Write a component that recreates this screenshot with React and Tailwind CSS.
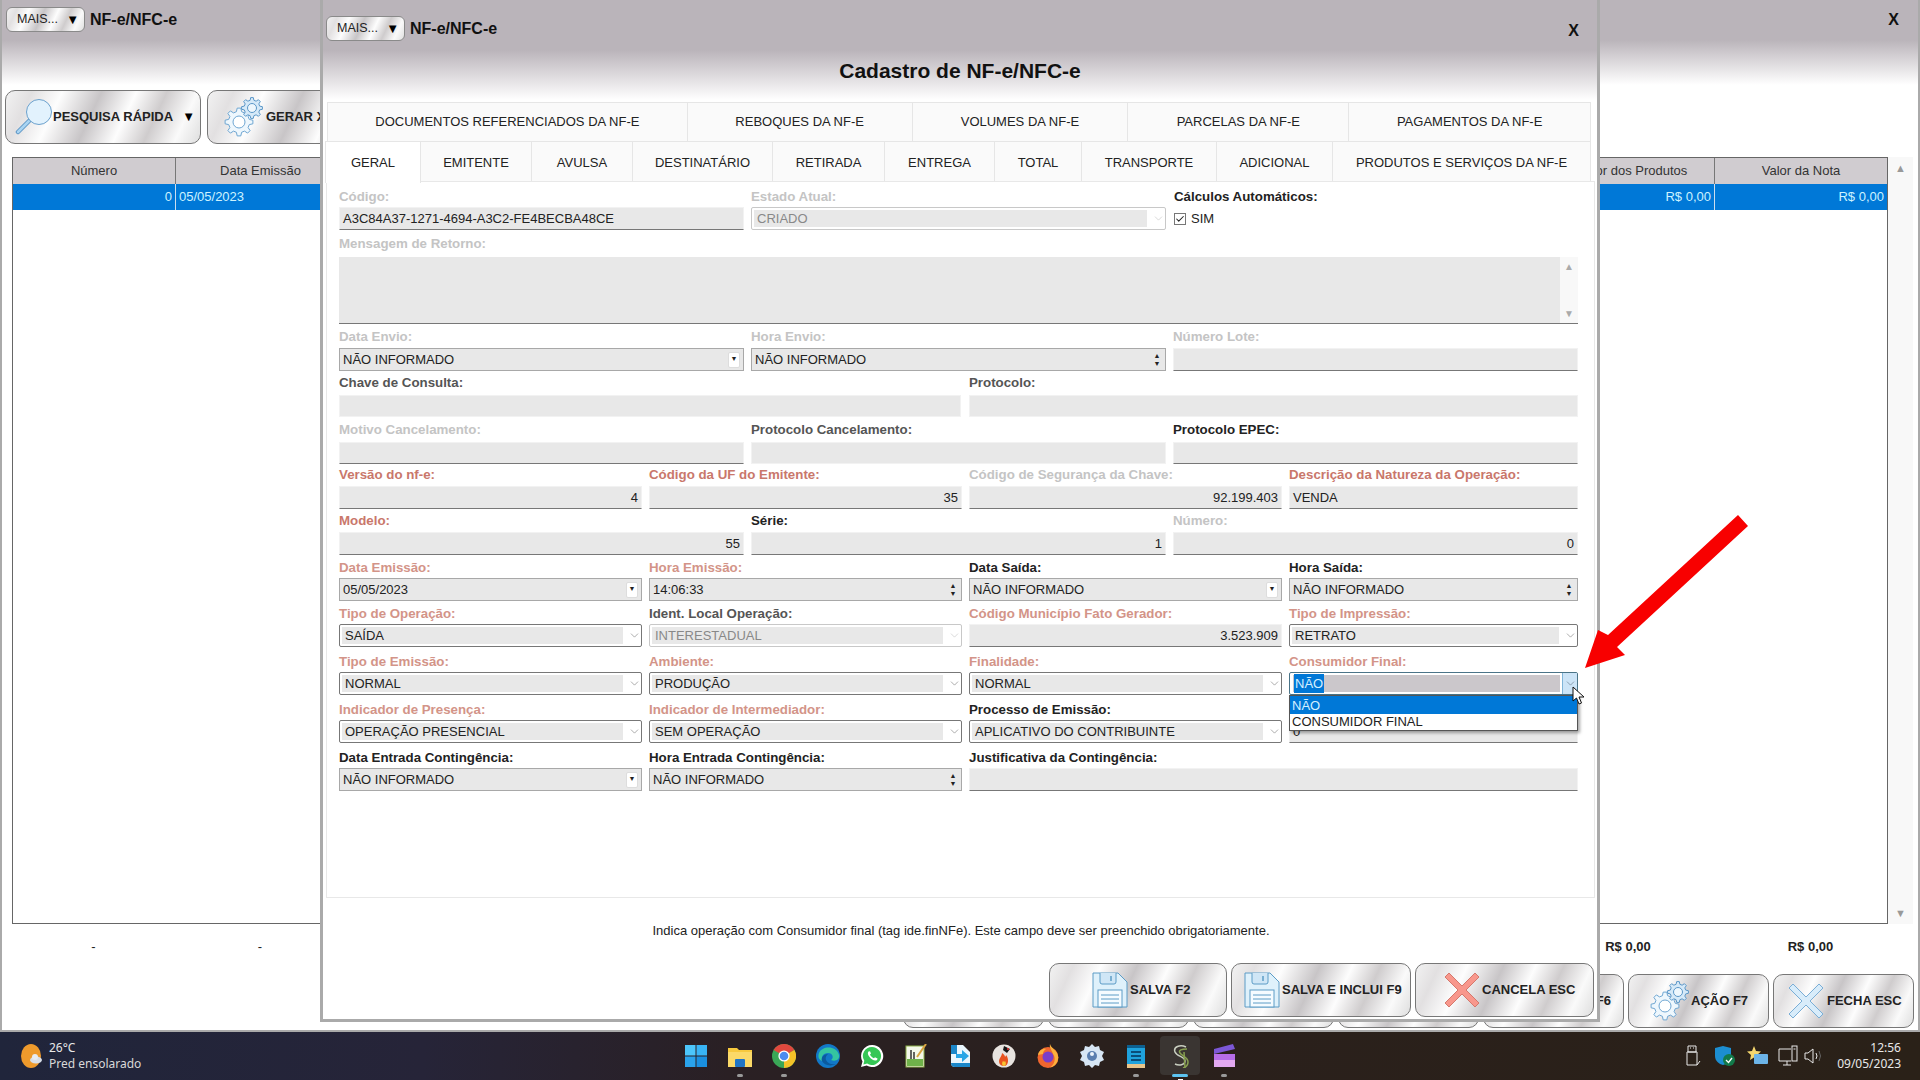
import { Check, ChevronDown } from "lucide-react";

const METAL =
  "bg-[linear-gradient(115deg,#f2f2f2_0%,#e2e0e1_12%,#fdfdfd_26%,#c8c5c7_44%,#fdfdfd_60%,#cfcccd_74%,#fafafa_88%,#dedede_100%)]";

function gearPath(cx, cy, r) {
  const teeth = 8;
  const pts = [];
  for (let i = 0; i < teeth; i++) {
    const a = (i / teeth) * Math.PI * 2;
    const s = Math.PI / teeth;
    const at = (rad, ang) => `${(cx + rad * Math.cos(ang)).toFixed(1)},${(cy + rad * Math.sin(ang)).toFixed(1)}`;
    pts.push(at(r * 0.76, a - s * 0.62), at(r, a - s * 0.32), at(r, a + s * 0.32), at(r * 0.76, a + s * 0.62));
  }
  return "M" + pts.join("L") + "Z";
}

function Gears() {
  return (
    <svg width="40" height="40" viewBox="0 0 40 40" className="shrink-0">
      <path d={gearPath(15, 25, 14)} fill="#eef7fd" stroke="#6ea6d2" />
      <circle cx="15" cy="25" r="6" fill="#fff" stroke="#6ea6d2" />
      <path d={gearPath(28, 11, 10.5)} fill="#d5e9f8" stroke="#5b97c8" />
      <circle cx="28" cy="11" r="4.5" fill="#eef7fd" stroke="#5b97c8" />
    </svg>
  );
}

function Floppy() {
  return (
    <svg width="36" height="36" viewBox="0 0 36 36" className="shrink-0">
      <path d="M1 1H26L35 10V35H1Z" fill="#dff1fb" stroke="#5c9cc6" />
      <path d="M8 1V10Q8 12 10 12H22Q24 12 24 10V1" fill="#cfe6f6" stroke="#5c9cc6" />
      <path d="M19 4V9" stroke="#5c9cc6" strokeWidth="1.5" />
      <rect x="6" y="18" width="24" height="17" fill="#f5fbff" stroke="#5c9cc6" />
      <path d="M9 23H27M9 27H27M9 31H27" stroke="#5c9cc6" />
    </svg>
  );
}

function CrossIcon({ fill, stroke }) {
  return (
    <svg width="36" height="36" viewBox="0 0 36 36" className="shrink-0">
      <path
        d="M5 1L18 14L31 1L35 5L22 18L35 31L31 35L18 22L5 35L1 31L14 18L1 5Z"
        fill={fill}
        stroke={stroke}
        strokeLinejoin="round"
      />
    </svg>
  );
}

function Magnifier() {
  return (
    <svg width="38" height="38" viewBox="0 0 38 38" className="shrink-0">
      <path d="M14 23L3 34" stroke="#5f97c6" strokeWidth="4.5" strokeLinecap="round" />
      <path d="M14 23L3 34" stroke="#a9d4f2" strokeWidth="2.5" strokeLinecap="round" />
      <circle cx="24" cy="14" r="12.5" fill="#e2f2fd" stroke="#6ba1cd" />
    </svg>
  );
}

function MaisButton() {
  return (
    <div className={`flex items-center justify-between w-[79px] h-[25px] pl-[10px] pr-[5px] rounded-[6px] border border-[#8a8a8a] ${METAL} text-[12.5px] text-[#222]`}>
      <span>MAIS...</span>
      <span className="text-[13px] text-black">▼</span>
    </div>
  );
}

function BigButton({ width = "w-[141px]", height = "h-[54px]", children, className = "" }) {
  return (
    <div className={`flex items-center shrink-0 ${width} ${height} rounded-[10px] border border-[#777] ${METAL} text-[13px] font-bold text-[#222] ${className}`}>
      {children}
    </div>
  );
}

function Label({ children, tone = "muted" }) {
  const tones = {
    muted: "text-[#c4c4c4]",
    dark: "text-[#555]",
    black: "text-[#222]",
    red: "text-[#c9776b]",
    rose: "text-[#d39488]",
  };
  return <div className={`h-4 leading-4 text-[13.3px] font-bold whitespace-nowrap ${tones[tone]}`}>{children}</div>;
}

function TextBox({ value, right, flat }) {
  return (
    <div
      className={`flex items-center h-full bg-[#e8e8e8] border border-[#f2f2f2] px-[3px] text-[13px] text-[#222] ${
        right ? "justify-end" : ""
      } ${flat ? "" : "border-b-[#777]"}`}
    >
      {value}
    </div>
  );
}

function DateBox({ value, spin }) {
  return (
    <div className="flex items-center justify-between h-full bg-[#e8e8e8] border border-[#a8a8a8] pl-[3px] pr-[3px] text-[13px] text-[#222]">
      <span>{value}</span>
      {spin ? (
        <span className="flex flex-col items-center w-[10px] text-[7px] leading-[8px] text-[#222]">
          <span>▲</span>
          <span>▼</span>
        </span>
      ) : (
        <span className="flex items-center justify-center w-[12px] h-[16px] rounded-[2px] bg-white border border-[#ddd] text-[7px] text-[#222]">▼</span>
      )}
    </div>
  );
}

function ComboBox({ value, disabled }) {
  return (
    <div className={`flex items-stretch h-full bg-white rounded-[2px] border p-[2px] text-[13px] ${disabled ? "border-[#c8c8c8] text-[#888]" : "border-[#777] text-[#222]"}`}>
      <div className="flex flex-1 items-center bg-[#e8e8e8] pl-[3px]">{value}</div>
      <div className="flex items-center justify-end w-[18px] -mr-[2px]">
        <ChevronDown size={13} strokeWidth={1} color={disabled ? "#bbb" : "#666"} />
      </div>
    </div>
  );
}

function Field({ label, tone, width, gap = "mt-[3px]", height = "h-[23px]", children }) {
  return (
    <div className={`shrink-0 ${width}`}>
      <Label tone={tone}>{label}</Label>
      <div className={`${gap} ${height}`}>{children}</div>
    </div>
  );
}

function Row({ className = "", children }) {
  return <div className={`flex gap-[7px] ${className}`}>{children}</div>;
}

function ConsumidorFinal() {
  return (
    <div className="relative h-full">
      <div className="flex items-stretch h-full bg-white border border-[#4a7488] rounded-[2px] text-[13px]">
        <div className="flex flex-1 items-center bg-[#cbc7cb] m-[2px] ml-[3px]">
          <span className="ml-[1px] bg-[#0078d7] text-[#d4f0ff] px-[1px]">NÃO</span>
        </div>
        <div className="flex items-center justify-center w-[15px] bg-[#cce4f7] border-l border-[#7fb4d8]">
          <ChevronDown size={13} strokeWidth={1} color="#567" />
        </div>
      </div>
      <div className="absolute left-0 top-full z-20 w-full bg-white border border-[#555] shadow-[2px_2px_3px_rgba(0,0,0,0.35)] text-[13px]">
        <div className="h-[18px] leading-[19px] bg-[#0078d7] text-[#d4f0ff] pl-[2px]">NÃO</div>
        <div className="h-[16px] leading-[16px] text-[#222] pl-[2px]">CONSUMIDOR FINAL</div>
      </div>
    </div>
  );
}

const TABS_TOP = [
  ["DOCUMENTOS REFERENCIADOS DA NF-E", "w-[360px]"],
  ["REBOQUES DA NF-E", "w-[225px]"],
  ["VOLUMES DA NF-E", "w-[216px]"],
  ["PARCELAS DA NF-E", "w-[221px]"],
  ["PAGAMENTOS DA NF-E", "w-[241px]"],
];

const TABS_BOTTOM = [
  ["EMITENTE", "w-[111px]"],
  ["AVULSA", "w-[101px]"],
  ["DESTINATÁRIO", "w-[140px]"],
  ["RETIRADA", "w-[112px]"],
  ["ENTREGA", "w-[110px]"],
  ["TOTAL", "w-[87px]"],
  ["TRANSPORTE", "w-[135px]"],
  ["ADICIONAL", "w-[116px]"],
  ["PRODUTOS E SERVIÇOS DA NF-E", "w-[258px]"],
];

function Tabs() {
  return (
    <div className="text-[13px] text-[#222]">
      <div className="flex ml-[4px] w-[1264px] h-[39px] bg-[#fafafa] border-t border-x border-[#e6e6e6]">
        {TABS_TOP.map(([name, w]) => (
          <div key={name} className={`flex items-center justify-center ${w} border-r last:border-r-0 border-[#e6e6e6]`}>
            {name}
          </div>
        ))}
      </div>
      <div className="flex ml-[2px] w-[1266px] h-[40px]">
        <div className="relative z-10 flex items-start justify-center pt-[11px] w-[96px] h-[42px] bg-white border-t border-x border-[#e6e6e6]">GERAL</div>
        {TABS_BOTTOM.map(([name, w]) => (
          <div key={name} className={`flex items-center justify-center pt-[2px] ${w} bg-[#fafafa] border-t border-r border-[#e6e6e6]`}>
            {name}
          </div>
        ))}
      </div>
    </div>
  );
}

function FormPanel() {
  return (
    <div className="ml-[3px] w-[1269px] h-[717px] border border-[#e8e8e8] bg-white pl-[12px] pt-[7px]">
      <Row>
        <Field label="Código:" width="w-[405px]" gap="mt-[2px]">
          <TextBox value="A3C84A37-1271-4694-A3C2-FE4BECBA48CE" />
        </Field>
        <Field label="Estado Atual:" width="w-[415px]" gap="mt-[2px]">
          <ComboBox value="CRIADO" disabled />
        </Field>
        <div className="ml-[1px]">
          <Label tone="black">Cálculos Automáticos:</Label>
          <div className="flex items-center gap-[5px] mt-[2px] h-[23px] text-[13px] text-[#222]">
            <span className="flex items-center justify-center w-[12px] h-[12px] border border-[#777] bg-white">
              <Check size={10} strokeWidth={2.5} color="#222" />
            </span>
            SIM
          </div>
        </div>
      </Row>

      <Row className="mt-[6px]">
        <Field label="Mensagem de Retorno:" width="w-[1239px]" gap="mt-[5px]" height="h-[67px]">
          <div className="flex h-full border-b border-[#777] bg-[#f8f8f8]">
            <div className="flex-1 bg-[#e8e8e8]" />
            <div className="flex flex-col items-center justify-between w-[18px] py-[2px] text-[10px] text-[#aaa]">
              <span>▲</span>
              <span>▼</span>
            </div>
          </div>
        </Field>
      </Row>

      <Row className="mt-[5px]">
        <Field label="Data Envio:" width="w-[405px]">
          <DateBox value="NÃO INFORMADO" />
        </Field>
        <Field label="Hora Envio:" width="w-[415px]">
          <DateBox value="NÃO INFORMADO" spin />
        </Field>
        <Field label="Número Lote:" width="w-[405px]" >
          <TextBox />
        </Field>
      </Row>

      <Row className="mt-[4px] gap-[8px]">
        <Field label="Chave de Consulta:" tone="dark" width="w-[622px]" gap="mt-1" height="h-[22px]">
          <TextBox flat />
        </Field>
        <Field label="Protocolo:" tone="dark" width="w-[609px]" gap="mt-1" height="h-[22px]">
          <TextBox flat />
        </Field>
      </Row>

      <Row className="mt-[5px]">
        <Field label="Motivo Cancelamento:" width="w-[405px]" gap="mt-1" height="h-[22px]">
          <TextBox />
        </Field>
        <Field label="Protocolo Cancelamento:" tone="dark" width="w-[415px]" gap="mt-1" height="h-[22px]">
          <TextBox flat />
        </Field>
        <Field label="Protocolo EPEC:" tone="black" width="w-[405px]" gap="mt-1" height="h-[22px]">
          <TextBox />
        </Field>
      </Row>

      <Row className="mt-[3px]">
        <Field label="Versão do nf-e:" tone="red" width="w-[303px]">
          <TextBox value="4" right />
        </Field>
        <Field label="Código da UF do Emitente:" tone="red" width="w-[313px]">
          <TextBox value="35" right />
        </Field>
        <Field label="Código de Segurança da Chave:" width="w-[313px]">
          <TextBox value="92.199.403" right />
        </Field>
        <Field label="Descrição da Natureza da Operação:" tone="red" width="w-[289px]">
          <TextBox value="VENDA" />
        </Field>
      </Row>

      <Row className="mt-[4px]">
        <Field label="Modelo:" tone="red" width="w-[405px]">
          <TextBox value="55" right />
        </Field>
        <Field label="Série:" tone="black" width="w-[415px]">
          <TextBox value="1" right />
        </Field>
        <Field label="Número:" width="w-[405px]">
          <TextBox value="0" right />
        </Field>
      </Row>

      <Row className="mt-[5px]">
        <Field label="Data Emissão:" tone="rose" width="w-[303px]" gap="mt-[2px]">
          <DateBox value="05/05/2023" />
        </Field>
        <Field label="Hora Emissão:" tone="rose" width="w-[313px]" gap="mt-[2px]">
          <DateBox value="14:06:33" spin />
        </Field>
        <Field label="Data Saída:" tone="black" width="w-[313px]" gap="mt-[2px]">
          <DateBox value="NÃO INFORMADO" />
        </Field>
        <Field label="Hora Saída:" tone="black" width="w-[289px]" gap="mt-[2px]">
          <DateBox value="NÃO INFORMADO" spin />
        </Field>
      </Row>

      <Row className="mt-[5px]">
        <Field label="Tipo de Operação:" tone="rose" width="w-[303px]" gap="mt-[2px]">
          <ComboBox value="SAÍDA" />
        </Field>
        <Field label="Ident. Local Operação:" tone="dark" width="w-[313px]" gap="mt-[2px]">
          <ComboBox value="INTERESTADUAL" disabled />
        </Field>
        <Field label="Código Município Fato Gerador:" tone="rose" width="w-[313px]" gap="mt-[2px]">
          <TextBox value="3.523.909" right />
        </Field>
        <Field label="Tipo de Impressão:" tone="rose" width="w-[289px]" gap="mt-[2px]">
          <ComboBox value="RETRATO" />
        </Field>
      </Row>

      <Row className="mt-[7px]">
        <Field label="Tipo de Emissão:" tone="rose" width="w-[303px]" gap="mt-[2px]">
          <ComboBox value="NORMAL" />
        </Field>
        <Field label="Ambiente:" tone="rose" width="w-[313px]" gap="mt-[2px]">
          <ComboBox value="PRODUÇÃO" />
        </Field>
        <Field label="Finalidade:" tone="rose" width="w-[313px]" gap="mt-[2px]">
          <ComboBox value="NORMAL" />
        </Field>
        <Field label="Consumidor Final:" tone="rose" width="w-[289px]" gap="mt-[2px]">
          <ConsumidorFinal />
        </Field>
      </Row>

      <Row className="mt-[7px]">
        <Field label="Indicador de Presença:" tone="rose" width="w-[303px]" gap="mt-[2px]">
          <ComboBox value="OPERAÇÃO PRESENCIAL" />
        </Field>
        <Field label="Indicador de Intermediador:" tone="rose" width="w-[313px]" gap="mt-[2px]">
          <ComboBox value="SEM OPERAÇÃO" />
        </Field>
        <Field label="Processo de Emissão:" tone="black" width="w-[313px]" gap="mt-[2px]">
          <ComboBox value="APLICATIVO DO CONTRIBUINTE" />
        </Field>
        <Field width="w-[289px]" gap="mt-[2px]">
          <TextBox value="0" />
        </Field>
      </Row>

      <Row className="mt-[7px]">
        <Field label="Data Entrada Contingência:" tone="black" width="w-[303px]" gap="mt-[2px]">
          <DateBox value="NÃO INFORMADO" />
        </Field>
        <Field label="Hora Entrada Contingência:" tone="black" width="w-[313px]" gap="mt-[2px]">
          <DateBox value="NÃO INFORMADO" spin />
        </Field>
        <Field label="Justificativa da Contingência:" tone="black" width="w-[609px]" gap="mt-[2px]">
          <TextBox />
        </Field>
      </Row>
    </div>
  );
}

function Modal() {
  return (
    <div className="absolute left-[320px] top-0 z-10 w-[1280px] h-[1022px] border-x-[3px] border-b-[3px] border-[#aaaaaa] bg-[linear-gradient(#bab4ba_0,#bab4ba_50px,#ffffff_100px)]">
      <div className="flex items-center justify-between h-[25px] mt-[16px] ml-[3px] pr-[18px]">
        <div className="flex items-center gap-[5px]">
          <MaisButton />
          <span className="text-[16px] font-bold text-[#111]">NF-e/NFC-e</span>
        </div>
        <span className="pt-1 text-[16px] font-bold text-[#111]">X</span>
      </div>
      <div className="h-[24px] leading-[24px] mt-[18px] mb-[19px] text-center text-[21px] font-bold text-[#111]">Cadastro de NF-e/NFC-e</div>
      <Tabs />
      <FormPanel />
      <div className="mt-[25px] h-[16px] leading-4 text-center text-[13px] text-[#222] pl-[2px]">
        Indica operação com Consumidor final (tag ide.finNFe). Este campo deve ser preenchido obrigatoriamente.
      </div>
      <div className="flex justify-end gap-[4px] mt-[24px] pr-[3px]">
        <BigButton width="w-[178px]" className="pl-[42px] gap-[2px]">
          <Floppy />
          SALVA F2
        </BigButton>
        <BigButton width="w-[180px]" className="pl-[12px] gap-[2px]">
          <Floppy />
          SALVA E INCLUI F9
        </BigButton>
        <BigButton width="w-[179px]" className="pl-[28px] gap-[2px]">
          <CrossIcon fill="#f8978c" stroke="#d5786c" />
          CANCELA ESC
        </BigButton>
      </div>
    </div>
  );
}

function BackWindow() {
  return (
    <div className="flex flex-col h-[1032px] border-x-2 border-b-2 border-[#aaaaaa] bg-[linear-gradient(#bab4ba_0,#bab4ba_40px,#ffffff_85px)]">
      <div className="flex items-center justify-between h-[25px] mt-[7px] ml-[4px] pr-[19px]">
        <div className="flex items-center gap-[5px]">
          <MaisButton />
          <span className="text-[16px] font-bold text-[#111]">NF-e/NFC-e</span>
        </div>
        <span className="text-[16px] font-bold text-[#111]">X</span>
      </div>

      <div className="flex gap-[6px] mt-[58px] ml-[3px]">
        <BigButton width="w-[196px]" className="pl-[9px] gap-0">
          <Magnifier />
          PESQUISA RÁPIDA
          <span className="ml-[9px] text-[13px] text-black">▼</span>
        </BigButton>
        <BigButton width="w-[196px]" className="pl-[16px] gap-[2px]">
          <Gears />
          GERAR XML
        </BigButton>
      </div>

      <div className="flex mt-[13px] ml-[10px] h-[767px]">
        <div className="flex flex-col w-[1876px] border-x border-t border-b border-[#666] bg-white text-[13px]">
          <div className="grid grid-cols-[163px_170px_1fr_164px_172px] h-[26px] bg-[#d0ccd0] text-[#333]">
            <div className="flex items-center justify-center border-r border-[#777]">Número</div>
            <div className="flex items-center justify-center border-r border-[#777]">Data Emissão</div>
            <div className="border-r border-[#777]" />
            <div className="flex items-center justify-center border-r border-[#777]">Valor dos Produtos</div>
            <div className="flex items-center justify-center">Valor da Nota</div>
          </div>
          <div className="grid grid-cols-[163px_170px_1fr_164px_172px] h-[26px] bg-[#0078d7] text-[#cdf3ff]">
            <div className="flex items-center justify-end pr-[3px] border-r border-[#cde]">0</div>
            <div className="flex items-center pl-[3px] border-r border-[#cde]">05/05/2023</div>
            <div className="border-r border-[#cde]" />
            <div className="flex items-center justify-end pr-[3px] border-r border-[#cde]">R$ 0,00</div>
            <div className="flex items-center justify-end pr-[3px]">R$ 0,00</div>
          </div>
        </div>
        <div className="flex flex-col items-center justify-between w-[25px] py-[3px] bg-[#f8f8f8] text-[11px] text-[#999]">
          <span>▲</span>
          <span>▼</span>
        </div>
      </div>

      <div className="grid grid-cols-[163px_170px_1fr_164px_172px] w-[1876px] ml-[10px] mt-[15px] h-4 leading-4 text-[13px] text-[#222]">
        <div className="text-center">-</div>
        <div className="text-center">-</div>
        <div />
        <div className="text-center font-bold pr-[12px]">R$ 0,00</div>
        <div className="text-center font-bold pl-[17px]">R$ 0,00</div>
      </div>

      <div className="flex justify-end gap-[4px] mt-[19px] pr-[4px]">
        <BigButton />
        <BigButton />
        <BigButton />
        <BigButton />
        <BigButton className="justify-end pr-[12px]">F6</BigButton>
        <BigButton className="pl-[21px] gap-[1px]">
          <Gears />
          AÇÃO F7
        </BigButton>
        <BigButton className="pl-[14px] gap-[3px]">
          <CrossIcon fill="#d8ecfa" stroke="#7aaed6" />
          FECHA ESC
        </BigButton>
      </div>
    </div>
  );
}

const APP_ICONS = [
  {
    id: "win",
    svg: (
      <>
        <rect x="1" y="1" width="10.5" height="10.5" fill="#4cc6fb" />
        <rect x="12.5" y="1" width="10.5" height="10.5" fill="#38b4f5" />
        <rect x="1" y="12.5" width="10.5" height="10.5" fill="#2aa3ec" />
        <rect x="12.5" y="12.5" width="10.5" height="10.5" fill="#1a8fdf" />
      </>
    ),
  },
  {
    id: "folder",
    dot: true,
    svg: (
      <>
        <path d="M0 4H9L11 6H24V23H0Z" fill="#f7c93e" />
        <path d="M0 8H24V23H0Z" fill="#fbd968" />
        <rect x="7" y="15" width="10" height="8" rx="1" fill="#1f74c4" />
      </>
    ),
  },
  {
    id: "chrome",
    dot: true,
    svg: (
      <>
        <circle cx="12" cy="12" r="12" fill="#3aa757" />
        <path d="M12 12L1.6 6A12 12 0 0 1 22.4 6Z" fill="#e0483e" />
        <path d="M12 12L22.4 6A12 12 0 0 1 12 24Z" fill="#f5c228" />
        <circle cx="12" cy="12" r="5.6" fill="#fff" />
        <circle cx="12" cy="12" r="4.3" fill="#4b8bf0" />
      </>
    ),
  },
  {
    id: "edge",
    svg: (
      <>
        <circle cx="12" cy="12" r="12" fill="#1278c8" />
        <path d="M3 9C6 2 20 1 23 11C24 15 20 18 15 16C18 14 17 9 12 9C7 9 5 13 6 17C2 15 2 12 3 9Z" fill="#35c5a0" />
        <path d="M6 17C8 21 14 23 20 20C16 21 12 20 10 16C9 13 11 11 12 10C8 10 5 13 6 17Z" fill="#0b5a9e" />
      </>
    ),
  },
  {
    id: "whatsapp",
    svg: (
      <>
        <path d="M12 1A11 11 0 0 0 2.5 17.5L1 23L6.7 21.5A11 11 0 1 0 12 1Z" fill="#fff" />
        <path d="M12 3A9 9 0 0 0 4.3 16.8L3.4 20.5L7.2 19.6A9 9 0 1 0 12 3Z" fill="#35c755" />
        <path d="M8.5 7.5C7.5 8.5 7.5 10.5 9.5 13C11.5 15.5 14 17 16 16.5C17 16.2 17.5 15.3 17.5 14.5L15 13.2L14 14.3C12.5 14 10.5 12 10 10.5L11 9.5L10 7.2Z" fill="#fff" />
      </>
    ),
  },
  {
    id: "note",
    svg: (
      <>
        <rect x="2" y="2" width="18" height="21" fill="#f4f8ea" stroke="#8db04a" />
        <rect x="3" y="15" width="16" height="7" fill="#6fb24a" />
        <path d="M7 6V15M10 8V15" stroke="#333" strokeWidth="1.5" />
        <path d="M13 13L22 0" stroke="#d9a441" strokeWidth="2" />
      </>
    ),
  },
  {
    id: "send",
    svg: (
      <>
        <path d="M3 1H15L22 8V23H7Q3 23 3 19Z" fill="#eaf6fd" />
        <path d="M3 1H9V10H3ZM13 19H22V23H7Q3 23 3 19Z" fill="#1b87c9" />
        <path d="M8 10H14V6L21 12L14 18V14H8Z" fill="#28a5e6" />
      </>
    ),
  },
  {
    id: "flame",
    svg: (
      <>
        <circle cx="12" cy="12" r="11.5" fill="#e8e4e0" />
        <path d="M12 22C7 22 6 17 8 14C9 12 10 11 10 9C12 10 13 12 13 13C14 12 14 11 14 11C17 14 17 22 12 22Z" fill="#e8531f" />
        <path d="M12 22C10 22 9.5 19 11 17C11.5 18 13 18 13 17C14.5 19 14 22 12 22Z" fill="#f8c331" />
        <path d="M12 2L18 5L15 9L11 6Z" fill="#161616" />
        <circle cx="16" cy="5" r="1" fill="#e33" />
      </>
    ),
  },
  {
    id: "firefox",
    svg: (
      <>
        <circle cx="12" cy="13.5" r="10.5" fill="#f0662f" />
        <path d="M14 0C15 4 19 5 21 9C24 15 21 22 14 23.5C19 20 20 14 17 10C16 6 13 4 14 0Z" fill="#fbb13c" />
        <circle cx="12" cy="13" r="5.5" fill="#7a3ec8" />
        <path d="M2 11C3 6 7 4 10 5C8 6 7 8 7 10C5 10 3 11 2 11Z" fill="#fbb13c" />
      </>
    ),
  },
  {
    id: "gear",
    svg: (
      <>
        <path d="M12 0L15 3L19 2L20 6L24 8L22 12L24 16L20 18L19 22L15 21L12 24L9 21L5 22L4 18L0 16L2 12L0 8L4 6L5 2L9 3Z" fill="#d7e6f5" />
        <circle cx="12" cy="12" r="5" fill="#5b7fb0" />
        <circle cx="12" cy="10" r="2" fill="#eef5fc" />
      </>
    ),
  },
  {
    id: "notepad",
    dot: true,
    svg: (
      <>
        <rect x="3" y="2" width="18" height="22" rx="1" fill="#1fa2dd" />
        <path d="M3 1H21V4H3Z" fill="#0d5f8f" />
        <path d="M7 8H17M7 12H17M7 16H17" stroke="#0a4d7a" strokeWidth="2" />
        <rect x="3" y="20" width="18" height="4" fill="#e8c48a" />
      </>
    ),
  },
  {
    id: "logo",
    active: true,
    svg: (
      <>
        <path d="M18 3C12 0 5 3 7 8C9 13 17 12 17 17C17 21 11 22 7 20" fill="none" stroke="#c9cfc0" strokeWidth="1.5" />
        <path d="M19 5C14 5 10 6 12 9C14 12 20 13 20 18C20 21 18 23 15 24" fill="none" stroke="#87a050" strokeWidth="1.5" />
        <path d="M16 8L17 24" stroke="#87a050" strokeWidth="1.5" />
      </>
    ),
  },
  {
    id: "clapper",
    dot: true,
    svg: (
      <>
        <path d="M2 10H23V23H2Z" fill="#b66de8" />
        <path d="M2 16H23V23H2Z" fill="#e2a8f0" />
        <path d="M2 5L21 0L23 5L2 10Z" fill="#7c57d6" />
      </>
    ),
  },
];

function Taskbar() {
  return (
    <div className="flex items-center h-[48px] bg-[linear-gradient(90deg,#20253b_0%,#262438_22%,#2a2024_38%,#2a201c_60%,#2a2118_100%)] text-[#e8e8e8] font-['Noto_Sans',sans-serif]">
      <div className="flex items-center gap-[6px] pl-[20px] w-[674px]">
        <svg width="23" height="24" viewBox="0 0 23 24" className="shrink-0">
          <ellipse cx="11" cy="12" rx="10" ry="12" fill="#ee9a2c" />
          <ellipse cx="16" cy="16" rx="6" ry="3.5" fill="#d9dfe8" />
          <circle cx="15" cy="13" r="3" fill="#e8ecf2" />
        </svg>
        <div className="text-[12px] leading-4">
          <div>26°C</div>
          <div className="text-[#d8d8d8]">Pred ensolarado</div>
        </div>
      </div>

      <div className="flex items-center">
        {APP_ICONS.map((icon) => (
          <div key={icon.id} className="relative flex items-center justify-center w-[44px] h-[40px]">
            {icon.active && <div className="absolute left-[2px] top-0 w-[40px] h-[39px] rounded-[4px] bg-[#3a3532]" />}
            <svg width="24" height="24" viewBox="0 0 24 24" className="relative">
              {icon.svg}
            </svg>
            {icon.dot && <div className="absolute bottom-[-1px] left-[19px] w-[6px] h-[3px] rounded-full bg-[#999]" />}
            {icon.active && <div className="absolute bottom-[-1px] left-[14px] w-[16px] h-[3px] rounded-full bg-[#5cc3f0]" />}
            {icon.active && <div className="absolute bottom-[-8px] left-[20px] w-[5px] h-[5px] bg-white" />}
          </div>
        ))}
      </div>

      <div className="flex flex-1 items-center justify-end pr-[19px]">
        <div className="flex items-center gap-[8px] mr-[15px]">
          <svg width="16" height="22" viewBox="0 0 16 22" fill="none" stroke="#e8e8e8" strokeWidth="1">
            <path d="M3 1H11V7H3ZM2 7H12V20H2Z" />
            <path d="M5 3H6M8 3H9M12 20L15 16" />
          </svg>
          <svg width="22" height="22" viewBox="0 0 22 22" className="ml-[6px]">
            <path d="M8 1L16 3V11C16 16 12 19 8 20C4 19 0 16 0 11V3Z" fill="#1c8ed1" />
            <circle cx="14" cy="15" r="6" fill="#127a4a" />
            <path d="M11 15L13.5 17.5L17 13" stroke="#fff" strokeWidth="1.3" fill="none" />
          </svg>
          <svg width="22" height="20" viewBox="0 0 22 20" className="ml-[2px]">
            <path d="M7 0L9 5L14 5.5L10 9L11 14L7 11.5L3 14L4 9L0 5.5L5 5Z" fill="#f5d76e" />
            <rect x="7" y="8" width="14" height="10" rx="1" fill="#6cb4e8" />
          </svg>
          <svg width="22" height="22" viewBox="0 0 22 22" fill="none" stroke="#e8e8e8" strokeWidth="1" className="ml-[1px]">
            <path d="M13 4H1V16H13" />
            <path d="M5 20H13M9 16V20" />
            <rect x="14" y="1" width="5" height="15" />
            <path d="M15.5 4H17.5" />
          </svg>
          <svg width="18" height="16" viewBox="0 0 18 16" fill="none" stroke="#e8e8e8" strokeWidth="1" className="-ml-[4px]">
            <path d="M1 5H4L9 1V15L4 11H1Z" />
            <path d="M12 5Q14 8 12 11" />
            <path d="M15 3Q18 8 15 13" stroke="#666" />
          </svg>
        </div>
        <div className="text-right text-[12px] leading-4">
          <div>12:56</div>
          <div>09/05/2023</div>
        </div>
      </div>
    </div>
  );
}

export default function App() {
  return (
    <div className="relative w-[1920px] h-[1080px] overflow-hidden bg-white font-['Liberation_Sans',Arial,sans-serif]">
      <BackWindow />
      <Taskbar />
      <Modal />

      {/* seta vermelha e cursor por cima do combo */}
      <svg width="175" height="165" viewBox="0 0 175 165" className="absolute left-[1580px] top-[510px] z-20">
        <polygon points="158,5 168,16 37,137 45,145 5,158 18,120 28,125" fill="#f80000" />
      </svg>
      <svg width="14" height="20" viewBox="0 0 14 20" className="absolute left-[1572px] top-[686px] z-30">
        <path d="M1 1V15L4.5 12L7 18L9.5 17L7 11H12Z" fill="#fff" stroke="#111" strokeWidth="1" />
      </svg>
    </div>
  );
}
